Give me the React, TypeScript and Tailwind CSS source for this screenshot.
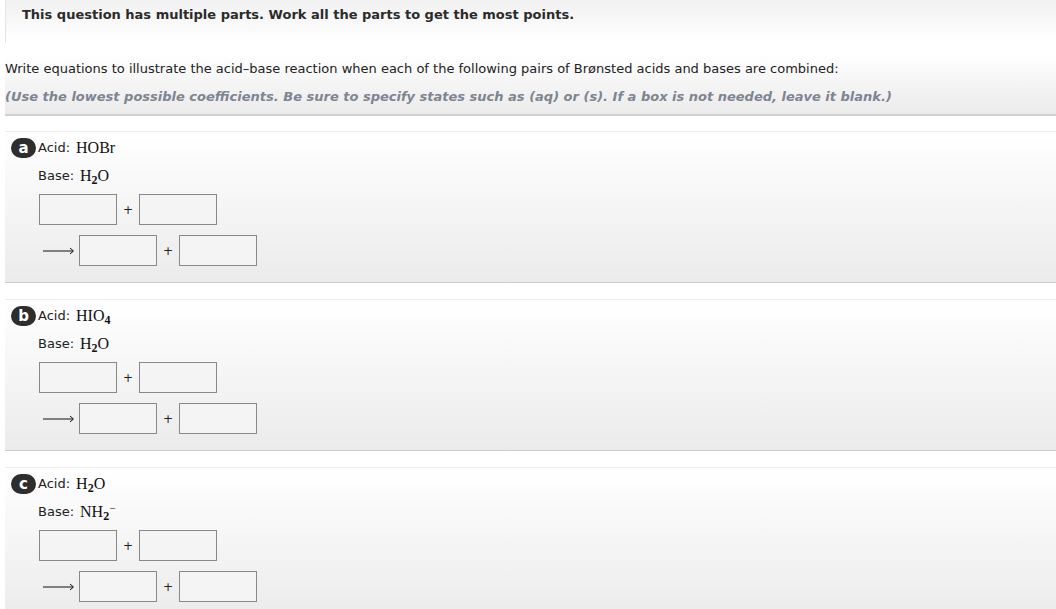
import React from "react"

const sans = "font-['DejaVu_Sans',Verdana,sans-serif]"
const serif = "font-['Liberation_Serif','Times_New_Roman',serif]"

function Box() {
  return <div className="w-[78px] h-[31px] border border-[#888] bg-[#f4f4f4]" />
}

function Plus() {
  return <span className="w-[22px] text-center text-[12px] text-[#222] leading-none">+</span>
}

function Arrow() {
  return (
    <svg width="36" height="10" viewBox="0 0 36 10" className="ml-[4px]">
      <line x1="0" y1="5" x2="30" y2="5" stroke="#111" strokeWidth="1" />
      <path d="M27 2 L30.5 5 L27 8" fill="none" stroke="#111" strokeWidth="1" />
    </svg>
  )
}

function Sub({ children }: { children: React.ReactNode }) {
  return <span className="relative top-[3px] text-[12px] font-bold">{children}</span>
}

function Part({ letter, acid, base }: { letter: string; acid: React.ReactNode; base: React.ReactNode }) {
  return (
    <div className="mt-[16px] ml-[5px] h-[152px] border-t border-[#eeeeee] border-b border-b-[#cccccc] bg-gradient-to-b from-white to-[#ebebeb]">
      <div className="flex items-center h-[20px] mt-[6px] ml-[6px]">
        <span className={`w-[25px] h-[20px] rounded-full bg-[#2e2e2e] text-white flex items-center justify-center text-[15px] font-bold leading-none ${sans}`}>
          {letter}
        </span>
        <span className="ml-[2px] text-[13px] text-[#222]">Acid:</span>
        <span className={`ml-[6px] text-[16px] text-[#111] ${serif}`}>{acid}</span>
      </div>
      <div className="flex items-center h-[20px] mt-[8px] ml-[33px]">
        <span className="text-[13px] text-[#222]">Base:</span>
        <span className={`ml-[6px] text-[16px] text-[#111] ${serif}`}>{base}</span>
      </div>
      <div className="flex items-center mt-[8px] ml-[34px]">
        <Box />
        <Plus />
        <Box />
      </div>
      <div className="flex items-center mt-[10px] ml-[34px]">
        <Arrow />
        <Box />
        <Plus />
        <Box />
      </div>
    </div>
  )
}

export default function App() {
  return (
    <div className={`w-[1056px] h-[609px] overflow-hidden bg-white ${sans}`}>
      {/* header */}
      <div className="ml-[5px] h-[43px] border-l border-[#e4e4e4] bg-gradient-to-b from-[#f1f1f1] to-white pl-[16px] pt-[7px]">
        <p className="text-[13px] leading-[16px] font-bold text-[#2b2b2b]">
          This question has multiple parts. Work all the parts to get the most points.
        </p>
      </div>

      {/* instructions */}
      <div className="mt-[10px] ml-[5px] h-[63px] border-b-2 border-[#d0d0d0] bg-gradient-to-b from-white to-[#ebebeb] pt-[8px]">
        <p className="text-[13px] leading-[16px] text-[#222]">
          Write equations to illustrate the acid–base reaction when each of the following pairs of Brønsted acids and bases are combined:
        </p>
        <p className="mt-[12px] text-[13px] leading-[16px] italic font-bold text-[#7d8591]">
          (Use the lowest possible coefficients. Be sure to specify states such as (aq) or (s). If a box is not needed, leave it blank.)
        </p>
      </div>

      <div className="-mt-[1px]">
        <Part letter="a" acid={<>HOBr</>} base={<>H<Sub>2</Sub>O</>} />
        <Part letter="b" acid={<>HIO<Sub>4</Sub></>} base={<>H<Sub>2</Sub>O</>} />
        <Part
          letter="c"
          acid={<>H<Sub>2</Sub>O</>}
          base={<>NH<Sub>2</Sub><span className="relative -top-[5px] text-[11px]">−</span></>}
        />
      </div>
    </div>
  )
}
